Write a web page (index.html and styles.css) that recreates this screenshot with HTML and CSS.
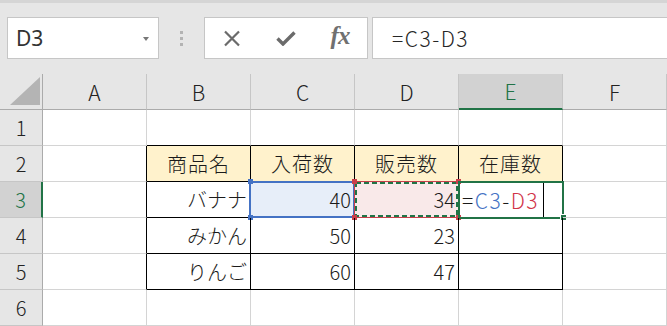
FILE: index.html
```html
<!DOCTYPE html>
<html lang="ja">
<head>
  <meta charset="UTF-8" />
  <title>Excel - 在庫数</title>
  <link rel="stylesheet" href="styles.css">
</head>
<body>
  <div class="band"></div>

  <!-- Name box + formula bar -->
  <div class="toolbar">
    <div class="namebox">
      <span class="ref">D3</span>
      <span class="drop"></span>
    </div>
    <div class="grip"><i></i><i></i><i></i></div>
    <div class="fxbtns">
      <span class="btn">
        <svg width="18" height="17" viewBox="0 0 18 17"><path d="M2 1.5 L16 15.5 M16 1.5 L2 15.5" stroke="#6b6b6b" stroke-width="2.2" fill="none"/></svg>
      </span>
      <span class="btn">
        <svg width="20" height="15" viewBox="0 0 20 15"><path d="M1.5 7.5 L7 13 L18.5 1.5" stroke="#6b6b6b" stroke-width="3.4" fill="none"/></svg>
      </span>
      <span class="btn fx">fx</span>
    </div>
    <div class="formula">=C3-D3</div>
  </div>

  <!-- Sheet -->
  <div class="sheet">
    <div class="cell corner">
      <svg width="30" height="28" viewBox="0 0 30 28"><polygon points="0,28 30,28 30,0" fill="#b4b4b4"/></svg>
    </div>
    <div class="cell colh">A</div>
    <div class="cell colh">B</div>
    <div class="cell colh">C</div>
    <div class="cell colh">D</div>
    <div class="cell colh on">E</div>
    <div class="cell colh">F</div>

    <div class="cell rowh">1</div>
    <div class="cell"></div>
    <div class="cell kb"></div>
    <div class="cell kb"></div>
    <div class="cell kb"></div>
    <div class="cell kb"></div>
    <div class="cell"></div>

    <div class="cell rowh">2</div>
    <div class="cell kr"></div>
    <div class="cell k head">商品名</div>
    <div class="cell k head">入荷数</div>
    <div class="cell k head">販売数</div>
    <div class="cell k head">在庫数</div>
    <div class="cell"></div>

    <div class="cell rowh on">3</div>
    <div class="cell kr"></div>
    <div class="cell k num">バナナ</div>
    <div class="cell k num c3">40
      <span class="sel blue"></span>
      <i class="h hb tl"></i><i class="h hb tr"></i><i class="h hb bl"></i><i class="h hb br"></i>
    </div>
    <div class="cell k num d3">34
      <span class="sel red">
        <svg width="103" height="35" viewBox="0 0 103 35"><rect x="1" y="1" width="101" height="33" fill="none" stroke="#217346" stroke-width="2" stroke-dasharray="5 3"/></svg>
      </span>
      <i class="h hr tl"></i><i class="h hr tr"></i><i class="h hr bl"></i><i class="h hr br"></i>
    </div>
    <div class="cell k edit">
      <span class="expr">=<b class="rc">C3</b>-<b class="rd">D3</b></span>
      <span class="caret"></span>
      <span class="sel green"></span>
      <i class="fill"></i>
    </div>
    <div class="cell"></div>

    <div class="cell rowh">4</div>
    <div class="cell kr"></div>
    <div class="cell k num">みかん</div>
    <div class="cell k num">50</div>
    <div class="cell k num">23</div>
    <div class="cell k"></div>
    <div class="cell"></div>

    <div class="cell rowh">5</div>
    <div class="cell kr"></div>
    <div class="cell k num">りんご</div>
    <div class="cell k num">60</div>
    <div class="cell k num">47</div>
    <div class="cell k"></div>
    <div class="cell"></div>

    <div class="cell rowh">6</div>
    <div class="cell"></div>
    <div class="cell"></div>
    <div class="cell"></div>
    <div class="cell"></div>
    <div class="cell"></div>
    <div class="cell"></div>
  </div>
</body>
</html>
```

FILE: styles.css
```css
body {
  margin: 0;
  background: #e6e6e6;
  font-family: "Noto Sans CJK JP", "Noto Sans", sans-serif;
  font-weight: 300;
  color: #222;
  overflow: hidden;
}
.band {
  height: 3px;
  background: #d5d5d5;
}
.toolbar {
  display: flex;
  height: 42px;
  margin-top: 14px;
  padding-left: 7px;
}
.namebox, .fxbtns, .formula {
  background: #fff;
  border: 1px solid #c6c6c6;
  box-sizing: border-box;
  height: 42px;
  display: flex;
  align-items: center;
}
.namebox {
  width: 152px;
  padding: 0 9px 0 8px;
  justify-content: space-between;
}
.ref {
  font-family: "Noto Sans", sans-serif;
  font-weight: 400;
  font-size: 21px;
  color: #333;
}
.drop {
  border-left: 3px solid transparent;
  border-right: 3px solid transparent;
  border-top: 4px solid #777;
  margin-top: 2px;
}
.grip {
  width: 45px;
  display: flex;
  flex-direction: column;
  align-items: center;
  justify-content: center;
  gap: 3px;
}
.grip i {
  width: 3px;
  height: 3px;
  background: #b3b3b3;
}
.fxbtns {
  width: 164px;
}
.btn {
  flex: 1;
  display: flex;
  justify-content: center;
  align-items: center;
}
.fx {
  font-family: "Liberation Serif", serif;
  font-style: italic;
  font-weight: bold;
  font-size: 25px;
  color: #707070;
  letter-spacing: -1px;
  padding-bottom: 4px;
}
.formula {
  flex: 1;
  margin-left: 4px;
  margin-right: -2px;
  padding-left: 19px;
  font-size: 21px;
  letter-spacing: 1.5px;
  color: #262626;
}

.sheet {
  display: grid;
  grid-template-columns: 43px repeat(5, 104px) 1fr;
  grid-auto-rows: 36px;
  margin-top: 15px;
  background: #fff;
}
.cell {
  position: relative;
  box-sizing: border-box;
  border-right: 1px solid #d4d4d4;
  border-bottom: 1px solid #d4d4d4;
  display: flex;
  align-items: center;
  padding: 0 3px;
  font-size: 20px;
  color: #1a1a1a;
}
.corner, .colh, .rowh {
  background: #e6e6e6;
  border-right-color: #c6c6c6;
  border-bottom-color: #c6c6c6;
  justify-content: center;
  color: #222;
}
.corner {
  align-items: flex-end;
  justify-content: flex-end;
  padding: 0 2px 4px 0;
  border-right-color: #ababab;
  border-bottom-color: #ababab;
}
.colh {
  border-bottom-color: #ababab;
  font-size: 21px;
}
.rowh {
  border-right-color: #ababab;
}
.colh.on {
  background: #d2d2d2;
  border-bottom: 2px solid #217346;
  color: #217346;
}
.rowh.on {
  background: #d2d2d2;
  border-right: 2px solid #217346;
  color: #217346;
}

/* table borders */
.k {
  border-right-color: #000;
  border-bottom-color: #000;
}
.kb {
  border-bottom-color: #000;
}
.kr {
  border-right-color: #000;
}
.head {
  background: #fff2cc;
  justify-content: center;
  letter-spacing: 1px;
}
.num {
  justify-content: flex-end;
}
.c3 {
  background: #e7eef9;
}
.d3 {
  background: #f9e9e9;
}

/* selections */
.sel {
  position: absolute;
  box-sizing: border-box;
}
.blue {
  left: -2px;
  top: -1px;
  right: -1px;
  bottom: -1px;
  border: 2px solid #4472c4;
}
.red {
  left: -1px;
  top: -1px;
  right: -1px;
  bottom: -1px;
  border: 1px solid #c9404b;
}
.red svg {
  display: block;
}
.green {
  left: -1px;
  top: -1px;
  right: -2px;
  bottom: -2px;
  border: 2px solid #217346;
}
.h {
  position: absolute;
  width: 5px;
  height: 5px;
}
.hb { background: #4472c4; }
.hr { background: #c9404b; }
.tl { left: -3px; top: -3px; }
.tr { right: -3px; top: -3px; }
.bl { left: -3px; bottom: -3px; }
.br { right: -3px; bottom: -3px; }
.expr {
  font-size: 21px;
  letter-spacing: 1.5px;
}
.edit b {
  font-weight: 300;
}
.rc { color: #4472c4; }
.rd { color: #d13448; }
.caret {
  position: absolute;
  left: 84px;
  top: 0;
  bottom: 0;
  width: 1px;
  background: #000;
}
.fill {
  position: absolute;
  right: -4px;
  bottom: -3px;
  width: 5px;
  height: 5px;
  background: #217346;
  box-shadow: -1px -1px 0 0 #fff;
}
```
